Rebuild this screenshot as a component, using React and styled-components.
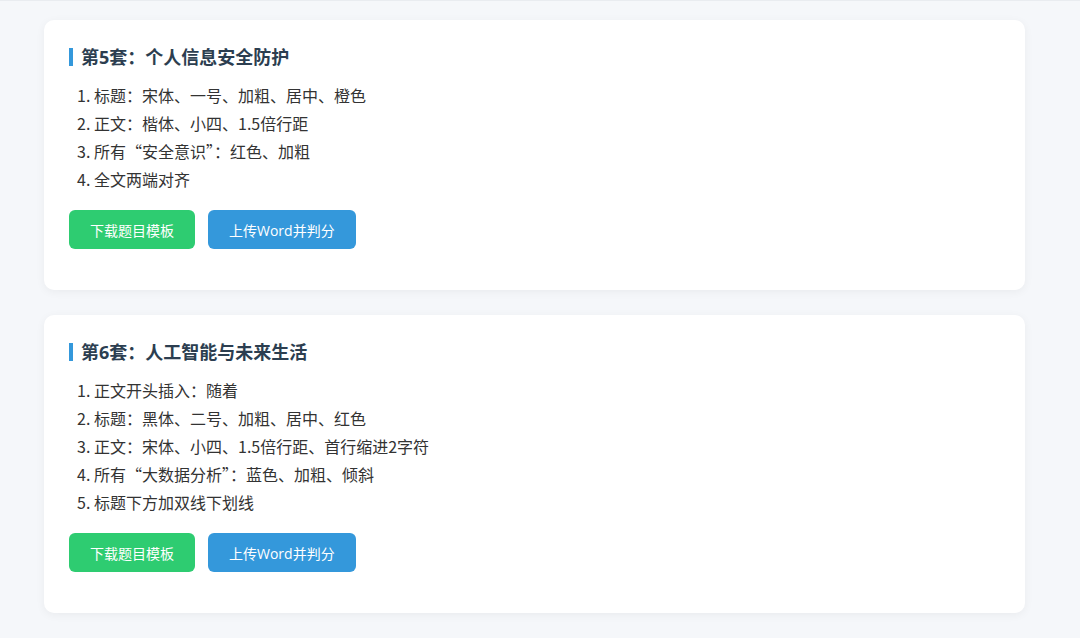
import React from 'react'
import styled, { createGlobalStyle } from 'styled-components'

const GlobalStyle = createGlobalStyle`
  html, body {
    margin: 0;
    padding: 0;
    background: #f5f7fa;
  }
  body {
    font-family: "Open Sans", "Noto Sans CJK SC", sans-serif;
    color: #333;
  }
`

const Page = styled.div`
  min-height: 638px;
  box-sizing: border-box;
  border-top: 1px solid #e9ecf0;
  padding: 19px 0 20px 44px;
  display: flex;
  flex-direction: column;
  gap: 25px;
`

const Card = styled.section`
  width: 981px;
  box-sizing: border-box;
  background: #fff;
  border-radius: 10px;
  box-shadow: 0 2px 10px rgba(0, 0, 0, 0.05);
  padding: 28px 25px 41px;
`

const Title = styled.h3`
  margin: 0 0 15px;
  font-size: 18px;
  font-weight: 700;
  line-height: 24px;
  color: #2c3e50;
  border-left: 4px solid #3498db;
  padding-left: 8px;
  height: 18px;
  display: flex;
  align-items: center;
`

const Steps = styled.ol`
  margin: 0 0 17px;
  padding-left: 25px;
  font-family: "Noto Sans CJK SC", sans-serif;
  font-size: 16px;
  line-height: 28px;
  color: #333;
`

const Step = styled.li``

const Actions = styled.div`
  display: flex;
  gap: 13px;
`

const Button = styled.button`
  height: 39px;
  padding: 0 21px;
  border: 0;
  border-radius: 6px;
  background: ${(p) => (p.$variant === 'upload' ? '#3498db' : '#2ecc71')};
  color: #fff;
  font-family: inherit;
  font-size: 14px;
  cursor: pointer;
`

const sets = [
  {
    title: '第5套：个人信息安全防护',
    steps: [
      '标题：宋体、一号、加粗、居中、橙色',
      '正文：楷体、小四、1.5倍行距',
      '所有“安全意识”：红色、加粗',
      '全文两端对齐',
    ],
  },
  {
    title: '第6套：人工智能与未来生活',
    steps: [
      '正文开头插入：随着',
      '标题：黑体、二号、加粗、居中、红色',
      '正文：宋体、小四、1.5倍行距、首行缩进2字符',
      '所有“大数据分析”：蓝色、加粗、倾斜',
      '标题下方加双线下划线',
    ],
  },
]

const App = () => {
  return (
    <>
      <GlobalStyle />
      <Page>
        {sets.map((set) => (
          <Card key={set.title}>
            <Title>{set.title}</Title>
            <Steps>
              {set.steps.map((step) => (
                <Step key={step}>{step}</Step>
              ))}
            </Steps>
            <Actions>
              <Button>下载题目模板</Button>
              <Button $variant='upload'>上传Word并判分</Button>
            </Actions>
          </Card>
        ))}
      </Page>
    </>
  )
}

export default App
